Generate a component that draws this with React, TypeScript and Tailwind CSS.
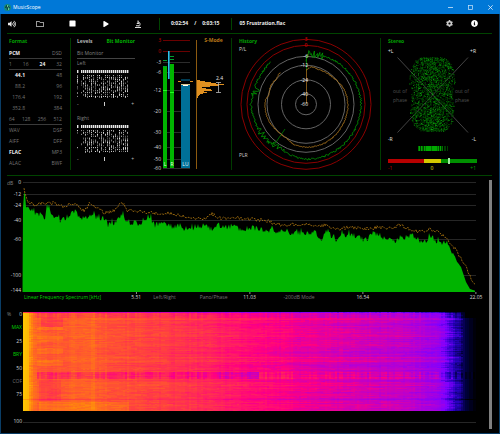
import type { ReactNode } from "react";
import {
  FaCog,
  FaInfoCircle,
  FaMicroscope,
  FaPlay,
  FaRegFolder,
  FaStop,
  FaVolumeUp,
} from "react-icons/fa";

type Point = [number, number];

function createRandom(seed: number) {
  let state = seed;
  return () => {
    state = (state * 1664525 + 1013904223) % 4294967296;
    return state / 4294967296;
  };
}

function interpolate(points: Point[], x: number) {
  for (let i = 1; i < points.length; i++) {
    const [x1, y1] = points[i];
    if (x <= x1) {
      const [x0, y0] = points[i - 1];
      return y0 + ((y1 - y0) * (x - x0)) / (x1 - x0 || 1);
    }
  }
  return points[points.length - 1][1];
}

/* ---------- Window chrome ---------- */

function TitleBar() {
  return (
    <header className="-mx-px flex h-3.5 items-center bg-[#0078d7] pl-1 text-white">
      <svg viewBox="0 0 14 14" className="size-[7px]" aria-hidden="true">
        <circle cx="7" cy="7" r="7" fill="#178a7a" />
        <path d="M3 8l2-5 2 8 2-6 2 3" stroke="#0b3b3f" strokeWidth="2" fill="none" />
        <path d="M7 2v4M9 7v5" stroke="#7fe0a0" strokeWidth="1.5" />
      </svg>
      <h1 className="ml-0.5 flex-1 text-[5px] leading-none font-medium">MusicScope</h1>
      <button aria-label="Minimize" className="flex w-5 justify-center">
        <svg viewBox="0 0 5 5" className="size-[5px]">
          <path d="M0 2.5h5" stroke="#cfe6fa" strokeWidth="0.8" />
        </svg>
      </button>
      <button aria-label="Maximize" className="flex w-5 justify-center">
        <svg viewBox="0 0 5 5" className="size-[5px]">
          <rect x="0.5" y="0.5" width="4" height="4" fill="none" stroke="#cfe6fa" strokeWidth="0.7" />
        </svg>
      </button>
      <button aria-label="Close" className="flex w-5 justify-center">
        <svg viewBox="0 0 5 5" className="size-[5px]">
          <path d="M0.3 0.3l4.4 4.4M4.7 0.3L0.3 4.7" stroke="#e4f1fc" strokeWidth="0.8" />
        </svg>
      </button>
    </header>
  );
}

function Toolbar() {
  return (
    <div className="flex h-[19px] items-center text-[5px] font-bold text-[#eeeeee]">
      <button aria-label="Volume" className="flex w-[22px] justify-center">
        <FaVolumeUp className="size-2 text-[#e8e8e8]" />
      </button>
      <button aria-label="Open folder" className="flex w-[33px] justify-center">
        <FaRegFolder className="size-2 text-[#cccccc]" />
      </button>
      <button aria-label="Stop" className="flex w-[33px] justify-center">
        <FaStop className="size-[7px] text-white" />
      </button>
      <button aria-label="Play" className="flex w-[33px] justify-center">
        <FaPlay className="size-1.5 text-white" />
      </button>
      <button aria-label="Analyze" className="flex w-[31px] justify-center">
        <svg viewBox="0 0 16 16" className="size-2" fill="none" stroke="#dddddd" strokeWidth="2">
          <path d="M2 15h12M4 11.5h6M8 1v7M8 4c5 0 5 6 2 9" />
          <path d="M5.500 7h5" />
        </svg>
      </button>
      <span className="ml-1.5 h-3 w-px bg-[#004400]" />
      <span className="ml-[11px]">0:02:54</span>
      <span className="mx-1.5">/</span>
      <span>0:03:15</span>
      <span className="ml-3 h-3 w-px bg-[#004400]" />
      <span className="ml-[7px] flex-1">05 Frustration.flac</span>
      <button aria-label="Settings" className="flex w-6 justify-center">
        <FaCog className="size-[7px] text-[#cccccc]" />
      </button>
      <button aria-label="Information" className="mr-3 flex w-[26px] justify-center">
        <FaInfoCircle className="size-[7px] text-white" />
      </button>
    </div>
  );
}

/* ---------- Format ---------- */

const FORMAT_ROWS = [
  { cells: ["PCM", "DSD"], active: "PCM", rule: true, numeric: false },
  { cells: ["1", "16", "24", "32"], active: "24", rule: true, numeric: false },
  { cells: ["44.1", "48"], active: "44.1", rule: false, numeric: true },
  { cells: ["88.2", "96"], active: "", rule: false, numeric: true },
  { cells: ["176.4", "192"], active: "", rule: false, numeric: true },
  { cells: ["352.8", "384"], active: "", rule: false, numeric: true },
  { cells: ["64", "128", "256", "512"], active: "", rule: true, numeric: false },
  { cells: ["WAV", "DSF"], active: "", rule: false, numeric: false },
  { cells: ["AIFF", "DFF"], active: "", rule: false, numeric: false },
  { cells: ["FLAC", "MP3"], active: "FLAC", rule: false, numeric: false },
  { cells: ["ALAC", "BWF"], active: "", rule: false, numeric: false },
];

function FormatPanel() {
  return (
    <section className="border-r border-[#003c00] pr-2 pl-0.5">
      <h2 className="mb-1 h-1.5 leading-[6px] font-bold text-[#00a000]">Format</h2>
      {FORMAT_ROWS.map((row) => (
        <div
          key={row.cells[0]}
          className={`flex h-[11px] items-center justify-between ${
            row.rule ? "border-b border-[#3a3a3a]" : ""
          }`}
        >
          {row.cells.map((cell, i) => (
            <span
              key={cell}
              className={`${row.numeric && i === 0 ? "w-4 text-right" : ""} ${
                cell === row.active ? "font-bold text-[#eeeeee]" : "text-[#747474]"
              }`}
            >
              {cell}
            </span>
          ))}
        </div>
      ))}
    </section>
  );
}

/* ---------- Bit monitor ---------- */

function BitMatrix({ seed }: { seed: number }) {
  const random = createRandom(seed);
  const bits: ReactNode[] = [];
  for (let col = 0; col < 26; col++) {
    if (col === 1) continue;
    bits.push(<rect key={`h${col}`} x={col * 2} y={0} width={1.4} height={3} fill="#e8e8e8" />);
    const sparse = col < 4 ? 0.4 : 0.7;
    for (let row = 0; row < 12; row++) {
      if (random() < sparse) {
        const level = Math.round(80 + random() * 150);
        bits.push(
          <rect
            key={`${col}-${row}`}
            x={col * 2}
            y={5 + row * 1.9}
            width={1}
            height={random() < 0.4 ? 1.9 : 1.1}
            fill={`rgb(${level},${level},${level})`}
          />,
        );
      }
    }
  }
  return (
    <svg viewBox="0 0 53 28" className="h-7 w-[53px]" aria-hidden="true">
      {bits}
    </svg>
  );
}

function BitChannel({ name, seed }: { name: string; seed: number }) {
  return (
    <div className="h-[55px]">
      <h3 className="mb-0.5 h-[9px] leading-[9px] text-[#808080]">{name}</h3>
      <BitMatrix seed={seed} />
      <div className="mt-0.5 mr-px flex h-2 items-center justify-between text-[#bbbbbb]">
        <span>-</span>
        <span className="h-1 w-px bg-[#cccccc]" />
        <span>+</span>
      </div>
    </div>
  );
}

function LevelsPanel() {
  return (
    <section className="pr-[15px] pl-1.5">
      <div className="mb-1 flex h-1.5 items-center justify-between font-bold whitespace-nowrap">
        <button className="text-[#b4b4b4]">Levels</button>
        <button className="text-[#00b000]">Bit Monitor</button>
      </div>
      <div className="flex h-[11px] items-center border-b border-[#444444] text-[#808080]">
        Bit Monitor
      </div>
      <BitChannel name="Left" seed={11} />
      <BitChannel name="Right" seed={73} />
    </section>
  );
}

/* ---------- Level meters ---------- */

const METER_SCALE: { label: string; y: number; over?: boolean }[] = [
  { label: "3", y: 2, over: true },
  { label: "0", y: 13, over: true },
  { label: "-3", y: 24 },
  { label: "-6", y: 34 },
  { label: "-12", y: 52 },
  { label: "-20", y: 73 },
  { label: "-30", y: 94 },
  { label: "-40", y: 109 },
  { label: "-50", y: 121 },
  { label: "-60", y: 130 },
];

const LOUDNESS_BINS = [3, 8, 14, 19, 27, 22, 13, 5, 9, 14, 15, 7, 10, 6, 3, 2, 1, 1];

function MeterPanel() {
  return (
    <section className="border-r border-[#003c00]">
      <svg viewBox="0 0 81 132" className="w-full overflow-visible" role="img" aria-label="Level meters">
        {METER_SCALE.map((mark) => (
          <g key={mark.label}>
            <path
              d={`M13 ${mark.y + 0.5}H40`}
              stroke={mark.over ? "#6a0000" : "#2c2c2c"}
              strokeWidth="1"
            />
            <text
              x="11"
              y={mark.y + 2}
              textAnchor="end"
              fill={mark.over ? "#cc0000" : "#d8d8d8"}
            >
              {mark.label}
            </text>
          </g>
        ))}
        <rect x="13" y="29" width="4" height="101" fill="#00b400" />
        <rect x="20" y="26" width="4" height="104" fill="#00b400" />
        <path d="M13 22.5h4M20 18.5h4M20 21.5h4M13 28.5h4" stroke="#009c30" />
        <path d="M13 52.5h4M20 54.5h4" stroke="#20ff20" />
        <rect x="18" y="13" width="1.6" height="28" fill="#2cc0e8" />
        <rect x="31" y="46" width="9" height="84" fill="#007098" />
        <rect x="31" y="41" width="9" height="2" fill="#003c54" />
        <rect x="31" y="46" width="9" height="1" fill="#d8c890" />
        <rect x="33" y="47" width="5" height="1" fill="#ffffff" />
        <path d="M28 43.5h3M40 43.5h3" stroke="#e09020" />
        <text x="15" y="128" textAnchor="middle" fill="#f0fff0">L</text>
        <text x="22" y="128" textAnchor="middle" fill="#f0fff0">R</text>
        <text x="35.5" y="128" textAnchor="middle" fill="#e8f8ff">LU</text>
        <path d="M46.5 2v129" stroke="#8c5a10" />
        {LOUDNESS_BINS.map((width, i) => (
          <rect key={i} x="47" y={42 + i} width={width} height="1" fill="#e09020" />
        ))}
        <text x="63.5" y="4" textAnchor="middle" fill="#b87818" fontWeight="bold">S-Mode</text>
        <text x="69.5" y="42" textAnchor="middle" fill="#e8e8e8">2.4</text>
        <path d="M66 44.5h5M66 54.5h5M68.5 44.5v10" stroke="#b8b8b8" strokeWidth="0.8" />
      </svg>
    </section>
  );
}

/* ---------- History ---------- */

function polarPath(radii: Point[], noise: (angle: number) => number, seed: number) {
  const random = createRandom(seed);
  let d = "";
  for (let angle = radii[0][0]; angle <= radii[radii.length - 1][0]; angle += 1) {
    const r = interpolate(radii, angle) + (random() - 0.5) * noise(angle);
    const a = (angle * Math.PI) / 180;
    d += `${d ? "L" : "M"}${(74 + Math.sin(a) * r).toFixed(1)} ${(66.3 - Math.cos(a) * r).toFixed(1)}`;
  }
  return d;
}

const PEAK_TRACE = polarPath(
  [[0, 45], [3, 51], [20, 51], [45, 53], [90, 55], [135, 55], [180, 55], [195, 53], [215, 51], [235, 53], [270, 55], [279, 54], [284, 51], [290, 54], [305, 54], [320, 55]],
  (a) => (a < 20 ? 8 : a > 205 && a < 245 ? 6 : a > 280 && a < 288 ? 9 : 1.8),
  5,
);

const LOUDNESS_TRACE = polarPath(
  [[2, 35], [8, 38], [20, 37], [45, 38], [70, 41], [90, 42], [120, 42], [150, 43], [180, 43], [197, 42], [210, 39], [225, 39], [250, 41], [275, 41], [285, 38], [297, 40], [310, 39], [321, 41]],
  () => 1,
  9,
);

const HISTORY_SCALE = [
  { label: "3", r: 65, over: true },
  { label: "0", r: 59, over: true },
  { label: "-6", r: 48, over: false },
  { label: "-12", r: 39, over: false },
  { label: "-24", r: 24.5, over: false },
  { label: "-40", r: 10.5, over: false },
  { label: "-60", r: 0, over: false },
];

function HistoryPanel() {
  return (
    <section className="border-r border-[#003c00]">
      <svg viewBox="0 0 148 132" className="w-full overflow-visible" role="img" aria-label="History">
        {HISTORY_SCALE.map((ring) => (
          <circle
            key={ring.label}
            cx="74"
            cy="66.3"
            r={ring.r}
            fill="none"
            stroke={ring.over ? "#8c0000" : "#646464"}
            strokeWidth="1"
          />
        ))}
        <path d={PEAK_TRACE} fill="none" stroke="#009c00" strokeWidth="0.8" />
        <path d="M53 91L42 107M74.5 33V20" stroke="#008000" strokeWidth="0.8" />
        <path d={LOUDNESS_TRACE} fill="none" stroke="#b07820" strokeWidth="0.8" />
        <path d="M74.5 66V31" stroke="#a06c1c" strokeWidth="0.8" />
        {HISTORY_SCALE.map((ring) => (
          <text
            key={ring.label}
            x={ring.over ? 74 : 76}
            y={68.3 - ring.r}
            textAnchor={ring.over ? "middle" : "end"}
            fill={ring.over ? "#e80000" : "#f0f0f0"}
          >
            {ring.label}
          </text>
        ))}
        <text x="7" y="5" fill="#00a000" fontWeight="bold">History</text>
        <text x="7" y="13" fill="#cccccc">P/L</text>
        <text x="7" y="119" fill="#cccccc">PLR</text>
      </svg>
    </section>
  );
}

/* ---------- Stereo ---------- */

function buildCloud() {
  const random = createRandom(42);
  const shades = ["#004400", "#006000", "#008000", "#10a810"];
  const paths = shades.map(() => "");
  for (let i = 0; i < 2900; i++) {
    const y = (random() * 2 - 1) * 37;
    const half = 23 * Math.pow(1 - Math.pow(Math.abs(y) / 40, 4), 0.5) - (Math.abs(y) < 10 ? 2 : 0);
    const spread = random() < 0.6 ? random() * 2 - 1 : random() + random() - 1;
    const x = spread * half;
    const shade = Math.min(3, Math.floor(random() * random() * 5));
    paths[shade] += `M${(51 + x).toFixed(1)} ${(56 + y).toFixed(1)}h.8v.8h-.8z`;
  }
  return shades.map((fill, i) => ({ fill, d: paths[i] }));
}

const CLOUD = buildCloud();
const BALANCE = [2, 3, 1, 3, 2, 1, 3, 2, 3, 3, 3, 3, 3, 2, 3, 3, 3, 3, 3, 2, 3, 1, 3, 1, 2, 0, 1, 1, 0, 1];
const BALANCE_SHADES = ["#000000", "#003c00", "#007000", "#00a800"];

function StereoPanel() {
  return (
    <section>
      <svg viewBox="0 0 110 132" className="w-full overflow-visible" role="img" aria-label="Stereo">
        <text x="7" y="5" fill="#00a000" fontWeight="bold">Stereo</text>
        <text x="7" y="15" fill="#e0e0e0">+L</text>
        <text x="95" y="15" textAnchor="end" fill="#e0e0e0">+R</text>
        <path d="M16.500 19.500L87 94.500M87 19.500L16.500 94.500" stroke="#444444" />
        <text x="12" y="55" fill="#505050">out of</text>
        <text x="12" y="64" fill="#505050">phase</text>
        <text x="74" y="55" fill="#505050">out of</text>
        <text x="74" y="64" fill="#505050">phase</text>
        {CLOUD.map((layer) => (
          <path key={layer.fill} d={layer.d} fill={layer.fill} />
        ))}
        <text x="7" y="103" fill="#e0e0e0">-R</text>
        <text x="95" y="103" textAnchor="end" fill="#e0e0e0">-L</text>
        {BALANCE.map((level, i) => (
          <rect key={i} x={37 + i} y="108" width="1" height="5" fill={BALANCE_SHADES[level]} />
        ))}
        <rect x="7" y="121" width="36" height="4" fill="#b80000" />
        <rect x="43" y="121" width="17" height="4" fill="#d4c800" />
        <rect x="60" y="121" width="36" height="4" fill="#009000" />
        <rect x="67" y="120" width="2" height="6" fill="#a0e8a0" />
        <text x="7" y="132" fill="#c00000">-1</text>
        <text x="51" y="132" textAnchor="middle" fill="#f0e400">0</text>
        <text x="95" y="132" textAnchor="end" fill="#00a000">+1</text>
      </svg>
    </section>
  );
}

/* ---------- Spectrum ---------- */

const LEVEL_POINTS: Point[] = [
  [16, 32], [17, 18], [18, 17], [19, 31], [23, 33], [28, 37], [33, 39], [38, 42], [40, 32], [42, 31],
  [44, 39], [53, 44], [60, 41], [67, 37], [69, 33], [72, 42], [80, 42], [82, 38], [88, 41], [95, 42],
  [101, 50], [108, 46], [116, 40], [123, 46], [133, 48], [142, 39], [148, 50], [156, 45], [163, 50],
  [173, 50], [180, 54], [188, 51], [198, 49], [205, 53], [211, 49], [218, 51], [228, 50], [238, 55],
  [243, 52], [258, 54], [268, 55], [278, 57], [293, 57], [308, 56], [314, 65], [320, 54], [328, 65],
  [334, 58], [348, 60], [358, 64], [367, 58], [378, 62], [390, 65], [398, 62], [405, 58], [415, 68],
  [423, 60], [433, 67], [440, 67], [448, 83], [454, 91], [459, 106], [463, 113], [469, 115],
];

const PEAK_POINTS: Point[] = [
  [17, 13], [21, 26], [28, 29], [38, 27], [48, 27], [55, 31], [65, 27], [78, 35], [82, 27], [98, 37],
  [108, 34], [112, 28], [117, 28], [120, 34], [138, 37], [163, 37], [178, 41], [198, 43], [205, 38],
  [211, 42], [233, 42], [243, 43], [258, 44], [268, 48], [283, 49], [298, 48], [308, 51], [318, 49],
  [328, 54], [343, 51], [358, 53], [373, 51], [385, 53], [393, 49], [403, 53], [413, 56], [423, 53],
  [433, 57], [440, 63], [448, 73], [456, 85], [463, 100], [469, 111],
];

const DB_SCALE = [
  { label: "0", y: 6 },
  { label: "-12", y: 18 },
  { label: "-24", y: 29 },
  { label: "-40", y: 44 },
  { label: "-60", y: 63 },
  { label: "-100", y: 99 },
  { label: "-144", y: 114 },
];

function buildLevelArea() {
  const random = createRandom(17);
  let d = "M15.500 116";
  for (let x = 16; x < 469; x += 1) {
    const spike = x > 20 && x < 450 ? (random() - 0.5) * 6 + (random() < 0.1 ? -3 : 0) : 0;
    d += `L${x} ${(interpolate(LEVEL_POINTS, x) + spike).toFixed(1)}`;
  }
  return `${d}V116Z`;
}

function buildPeakLine() {
  const random = createRandom(29);
  let d = "";
  for (let x = 17; x < 469; x += 1) {
    const y = interpolate(PEAK_POINTS, x) + (random() - 0.5) * 3.5;
    d += `${d ? "L" : "M"}${x} ${y.toFixed(1)}`;
  }
  return d;
}

const LEVEL_AREA = buildLevelArea();
const PEAK_LINE = buildPeakLine();

function Tick({ children }: { children: ReactNode }) {
  return (
    <span className="absolute top-0 right-0 flex translate-x-1/2 flex-col items-center text-[#d8d8d8]">
      <span className="h-0.5 w-px bg-[#909090]" />
      <span className="leading-[6px]">{children}</span>
    </span>
  );
}

function Spectrum() {
  return (
    <section>
      <svg viewBox="0 0 477 116" className="w-full" role="img" aria-label="Frequency spectrum">
        {DB_SCALE.slice(0, 6).map((mark) => (
          <path key={mark.label} d={`M16 ${mark.y + 0.5}H469`} stroke="#262626" />
        ))}
        <path d={LEVEL_AREA} fill="#00b400" />
        <path d={PEAK_LINE} fill="none" stroke="#b07810" strokeWidth="0.8" strokeDasharray="2 1" />
        {DB_SCALE.map((mark) => (
          <text key={mark.label} x="14" y={mark.y + 2} textAnchor="end" fill="#d8d8d8">
            {mark.label}
          </text>
        ))}
        <text x="0" y="9" fill="#808080">dB</text>
      </svg>
      <div className="mr-2 ml-4 grid h-[13px] grid-cols-4 whitespace-nowrap text-[#747474]">
        <div className="relative pl-px">
          <button className="flex h-[11px] items-center text-[#00d000]">Linear Frequency Spectrum [kHz]</button>
          <Tick>5.51</Tick>
        </div>
        <div className="relative flex h-[11px] items-center justify-between pr-[22px] pl-[17px]">
          <button>Left/Right</button>
          <button>Pano/Phase</button>
          <Tick>11.03</Tick>
        </div>
        <div className="relative flex h-[11px] items-center pl-[34px]">
          <button>-200dB Mode</button>
          <Tick>16.54</Tick>
        </div>
        <div className="relative">
          <Tick>22.05</Tick>
        </div>
      </div>
    </section>
  );
}

/* ---------- Spectrogram ---------- */

const PALETTE: [number, number, number, number][] = [
  [0, 0, 0, 0],
  [0.08, 0, 0, 64],
  [0.2, 40, 0, 190],
  [0.3, 128, 0, 255],
  [0.42, 184, 0, 208],
  [0.55, 255, 0, 128],
  [0.7, 255, 64, 64],
  [0.85, 255, 128, 16],
  [1, 255, 210, 0],
];

function heat(value: number) {
  const channel = (c: 1 | 2 | 3) =>
    Math.round(interpolate(PALETTE.map((stop): Point => [stop[0], stop[c]]), value));
  return `rgb(${channel(1)},${channel(2)},${channel(3)})`;
}

const ENERGY: Point[] = [
  [0, 0.98], [4, 0.94], [7, 0.86], [12, 0.78], [20, 0.75], [40, 0.76], [55, 0.78], [66, 0.77], [68, 0.81],
  [74, 0.76], [100, 0.73], [130, 0.7], [180, 0.65], [226, 0.58], [270, 0.53], [310, 0.49], [350, 0.46],
  [390, 0.42], [410, 0.37], [421, 0.31], [430, 0.21], [438, 0.13], [445, 0.05], [453, 0.01],
];

function buildSpectrogram() {
  const random = createRandom(101);
  const layers = new Map<number, string>();
  const columns = Array.from({ length: 227 }, () => (random() - 0.5) * 0.025);
  let slow = 0;
  for (let y = 0; y < 99; y++) {
    if (y % 5 === 0) slow = (random() - 0.5) * 0.09;
    const fast = (random() - 0.5) * 0.035;
    const breakdown = y >= 60 && y < 67;
    let streak = 0;
    for (let i = 0; i < 227; i++) {
      const x = i * 2;
      if (random() < 0.3) streak = (random() - 0.5) * 0.05;
      const right = Math.min(1, x / 300);
      let value = interpolate(ENERGY, x) + columns[i];
      if (x > 4 && x < 440) value += streak + fast * (0.4 + right) + slow * (0.15 + right * 0.5);
      if (breakdown && x > 12) value += (x < 235 ? -0.08 : x < 415 ? 0.05 : 0) + columns[i] * 3;
      if (y < 6 && x > 10) value += -0.05 + columns[i] * 2;
      if (y > 5 && y < 15 && x > 16 && x < 40) value -= 0.05;
      if (y > 67 && y < 89 && x > 14 && x < 38) value -= 0.05;
      if (y > 14 && y < 60 && x > 12 && x < 40 && Math.floor(y / 6) % 2 === 0) value += 0.05;
      if (y > 89 && x > 14 && x < 105) value += 0.05;
      if (y === 87) value -= 0.06;
      if (y === 0) value *= 0.7;
      const bucket = Math.max(0, Math.min(80, Math.round(value * 80)));
      if (bucket > 0) {
        const width = Math.min(2, 453 - x);
        layers.set(bucket, `${layers.get(bucket) ?? ""}M${x} ${y}h${width}v1h-${width}z`);
      }
    }
  }
  return Array.from(layers, ([bucket, d]) => ({ fill: heat(bucket / 80), d }));
}

const SPECTROGRAM = buildSpectrogram();

function Spectrogram() {
  return (
    <section className="mt-1.5 flex pr-2">
      <div className="flex h-[114px] w-[15px] flex-col justify-between text-right leading-[7px] text-[#d8d8d8]">
        <span className="flex justify-between">
          <span className="text-[#808080]">%</span>
          <span>0</span>
        </span>
        <button className="text-right text-[#00d000]">MAX</button>
        <span>25</span>
        <button className="text-right text-[#00d000]">BRY</button>
        <span>50</span>
        <button className="text-right text-[#747474]">COF</button>
        <span>75</span>
        <span className="h-[7px]" />
        <span>100</span>
      </div>
      <div className="mt-px ml-px min-w-0 flex-1">
        <svg
          viewBox="0 0 453 99"
          preserveAspectRatio="none"
          shapeRendering="crispEdges"
          className="h-[99px] w-full"
          role="img"
          aria-label="Spectrogram"
        >
          {SPECTROGRAM.map((layer) => (
            <path key={layer.fill} d={layer.d} fill={layer.fill} />
          ))}
        </svg>
        <div className="mt-[11px] h-px bg-[#262626]" />
      </div>
    </section>
  );
}

export default function App() {
  return (
    <div className="flex min-h-screen flex-col border-x border-b border-[#0a3d66] bg-black font-['Open_Sans','Liberation_Sans',sans-serif] text-[5px] leading-none [&_text]:text-[5px]">
      <TitleBar />
      <Toolbar />
      <main className="flex flex-1 flex-col pr-[7px] pl-1.5">
        <div className="grid grid-cols-[64fr_79fr_82fr_149fr_110fr] border-y border-[#004400] pt-1 pr-px pb-[5px]">
          <FormatPanel />
          <LevelsPanel />
          <MeterPanel />
          <HistoryPanel />
          <StereoPanel />
        </div>
        <div className="flex flex-1 gap-[5px]">
          <div className="min-w-0 flex-1">
            <Spectrum />
            <Spectrogram />
          </div>
          <div className="mt-1 mb-1 w-[3px] bg-[#808080]" />
        </div>
      </main>
    </div>
  );
}
